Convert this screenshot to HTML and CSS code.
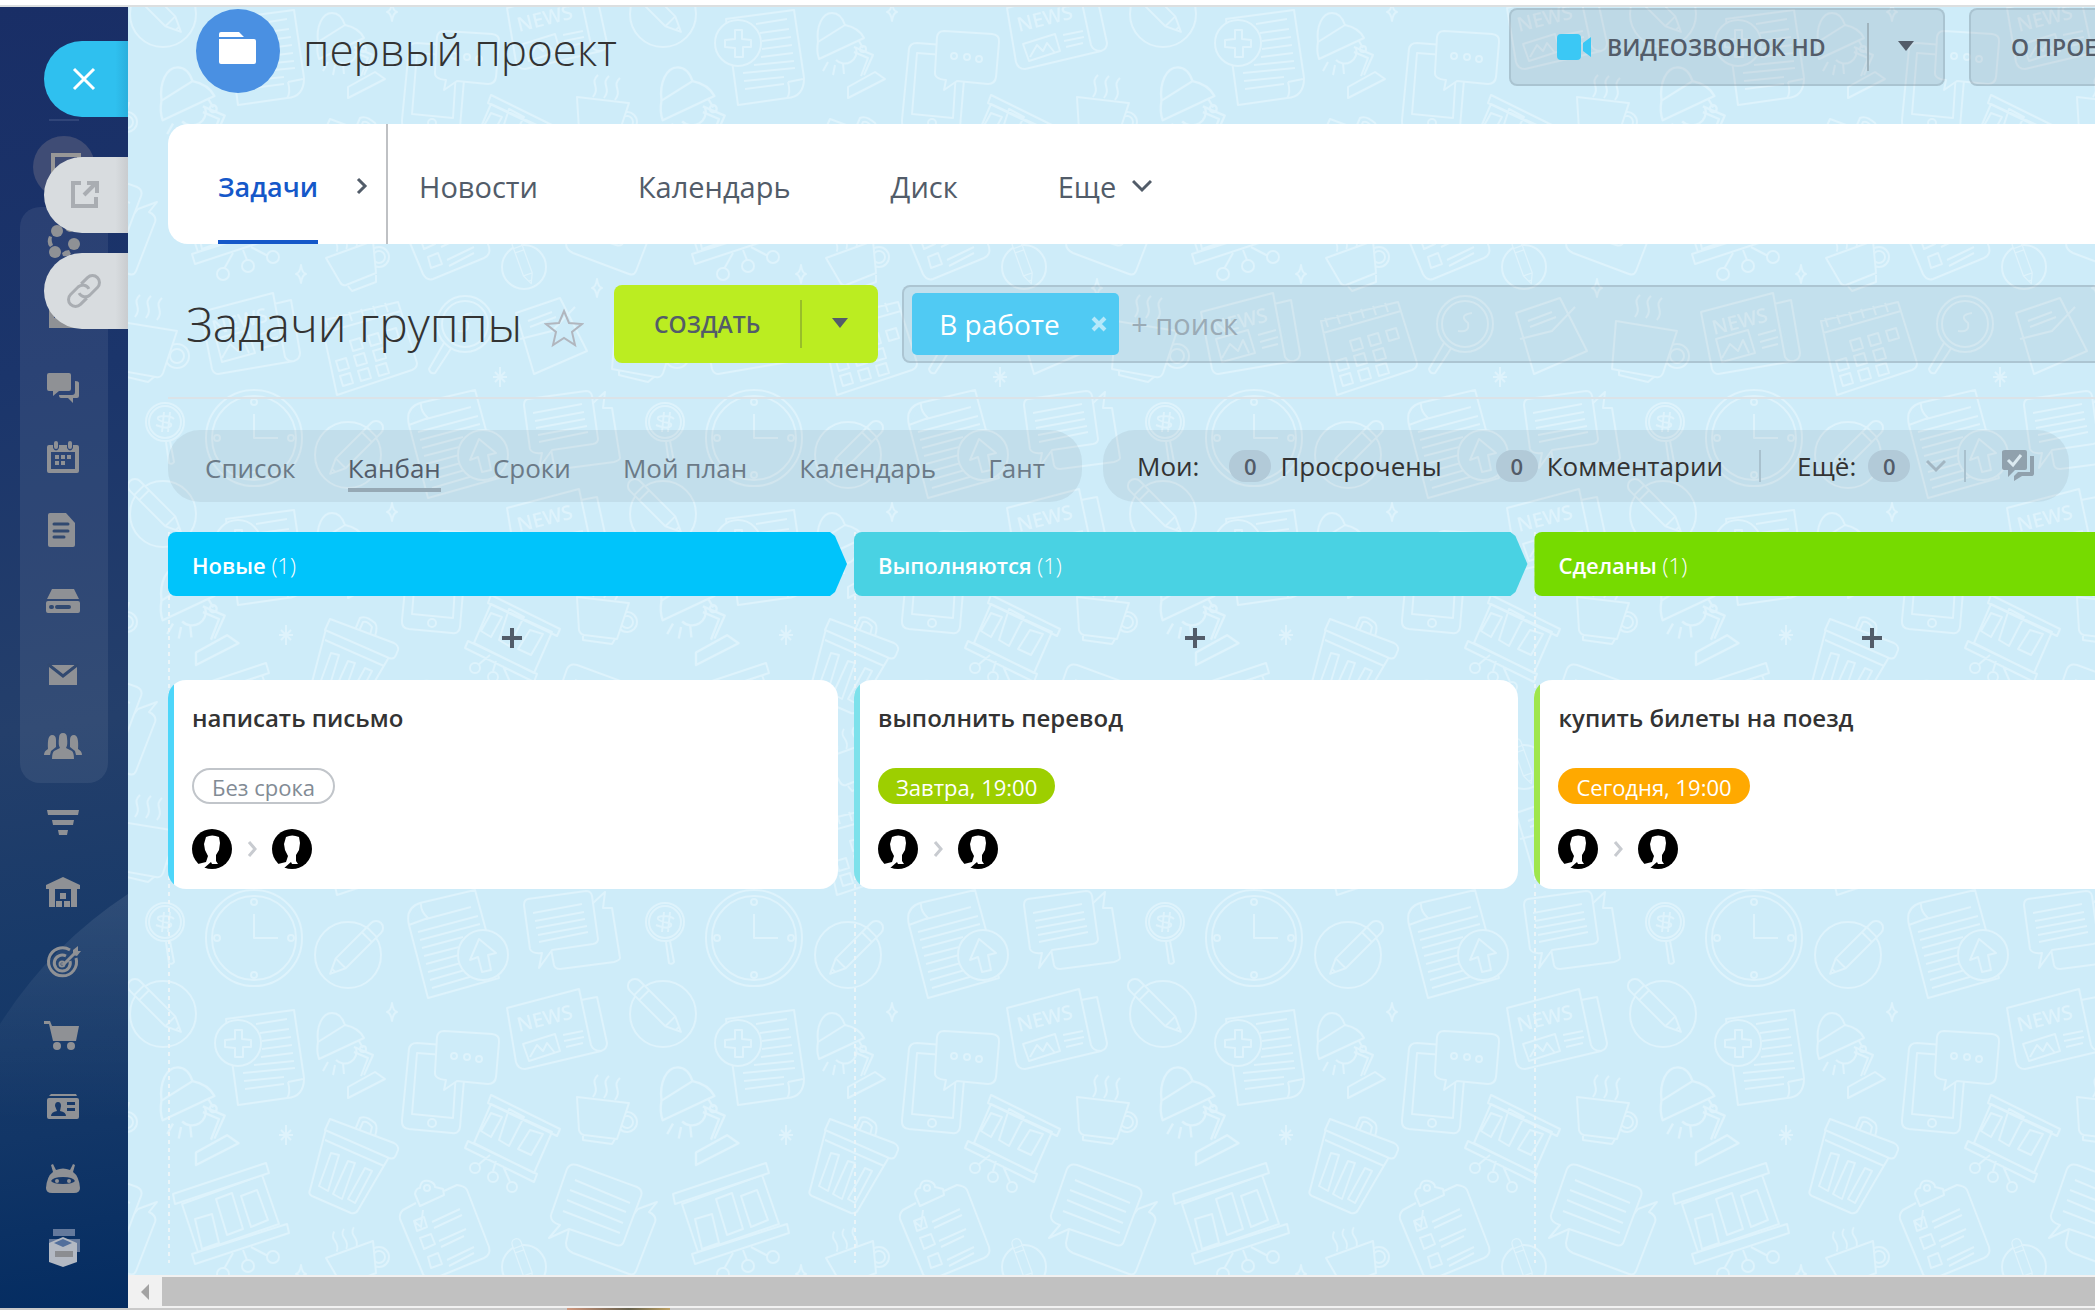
FILE: index.html
```html
<!DOCTYPE html>
<html lang="ru">
<head>
<meta charset="utf-8">
<title>первый проект</title>
<link rel="stylesheet" href="styles.css">
</head>
<body>
<svg class="sprite" width="0" height="0" aria-hidden="true">
  <defs>
    <g id="pencil"><path d="M7-7a7 7 0 0 0 0 14H57L72 0L57-7ZM13-7v14M20-7v14M57-7v14M67-2v4"/></g>
    <g id="lamp">
      <path d="M190 151C188 136 194 122 204 122C211 122 215 128 217 134"/>
      <path d="M208 169a12 12 0 0 0 20-12"/>
      <path d="M190 151L217 134C227 136 233 141 236 147L191 168C189 162 189 156 190 151Z"/>
      <path d="M226 156L245 164L236 184M226 161L240 167L233 185M231 150L235 157"/><circle cx="235" cy="158" r="3"/>
      <path d="M220 196L247 181L257 188L220 207ZM200 171l-5 9M207 174l-2 10M215 173l1 10"/>
    </g>
    <g id="star8"><path d="M0-10V10M-7 0H7M-5-5L5 5M-5 5L5-5"/></g>
    <g id="spark"><path d="M0-9Q1-1 5 0Q1 1 0 9Q-1 1-5 0Q-1-1 0-9Z"/></g>
    <g id="steam"><path d="M5 0C-4 8 8 12 0 22M16 1C7 9 19 13 11 23M27 3C18 11 30 15 22 25"/></g>
    <g id="tile">
      <g id="doodles">
        <path d="M38 51L41 72Q44 74 46 71L42 50"/><circle cx="37" cy="31" r="19"/><circle cx="37" cy="31" r="16"/>
        <path d="M46 28C42 24 28 24 30 28C34 33 45 30 43 35C41 38 33 36 28 34M36 21L34 41M42 21L40 41"/>
        <circle cx="126" cy="47" r="48"/><circle cx="126" cy="47" r="42"/><path d="M126 23V47H150"/>
        <circle cx="126" cy="11" r="3"/><circle cx="126" cy="84" r="3"/><circle cx="89" cy="47" r="3"/><circle cx="163" cy="47" r="3"/>
        <circle cx="220" cy="64" r="33"/><use href="#pencil" transform="translate(253 32) rotate(135)"/>
        <path d="M281 34Q277 17 292 12L347-1L371 87L300 107ZM281 34L300 27Q292 20 293 11"/>
        <path d="M298 28L343 16M290 41L350 25M292 49L352 33M294 57L335 46M296 65L331 56M298 73L331 64M300 81L333 72M302 89L337 79M304 97L345 85"/>
        <circle cx="355" cy="64" r="25"/><path d="M351 48L368 62L360 64L363 79L354 81L350 66L342 69Z"/>
        <path d="M464 13L477 1L475 17L484 17Q492 67 492 67Q492 69 486 71L432 78Q427 78 426 74L423 58"/>
        <path d="M400 8L458 0Q463 0 464 5L470 48Q470 52 465 53L424 59L411 77L414 62Q404 63 402 58L396 14Q396 9 400 8Z"/>
        <path d="M405 22L454 13M407 30L456 21M408 37L457 28M410 44L459 35M411 51L460 41"/>
        <circle cx="35" cy="123" r="33"/><use href="#pencil" transform="translate(2 90) rotate(45)"/>
        <path d="M98 128L166 119L176 187Q176 206 159 207L110 214L105 177Z"/>
        <path d="M160 191L175 188M160 191Q163 202 159 207M128 133L159 128M132 142L161 138M134 150L163 146M134 158L164 154M133 166L165 162M126 174L166 170M115 182L167 177M116 190L156 186M117 198L156 193"/>
        <circle cx="110" cy="152" r="23"/><path d="M107 139H114V148L123 149V156L115 156V166H107V157L97 156V149L107 148Z"/>
        <use href="#lamp"/><use href="#lamp" transform="translate(-185 36) scale(1.15)"/>
        <use href="#spark" x="264" y="121"/><use href="#star8" x="158" y="244"/>
        <path d="M289 152L328 155Q338 156 338 165L332 236Q331 243 324 242L281 238Q273 237 274 229L281 158Q282 152 289 152ZM289 162L329 165L325 227L284 223Z"/><circle cx="304" cy="232" r="4"/>
        <path d="M316 140L364 143Q372 144 371 151L368 186Q367 193 360 193L329 190L316 199L318 189Q306 188 307 181L309 146Q310 140 316 140Z"/><circle cx="326" cy="165" r="3"/><circle cx="339" cy="166" r="3"/><circle cx="351" cy="168" r="3"/>
        <path d="M453 109L469 106L479 152Q479 158 473 160L397 178Q390 178 388 171L379 117L451 98L463 154Q465 160 473 160M395 153L427 143L432 160L401 170ZM402 166L409 154L415 160L419 152L427 162M435 144L455 140M436 150L456 146M438 156L455 152"/>
        <text x="391" y="141" transform="rotate(-14 391 141)">NEWS</text>
        <path d="M363 213L346 252L406 282L424 241ZM363 222L374 226L363 246L353 240ZM381 218L396 226L381 255L371 249ZM402 239L415 243L403 264L390 258ZM363 204L432 238L429 245L360 212ZM340 250L409 283L406 291L337 257ZM362 264L350 274M368 270L365 280M375 275L382 291"/>
        <circle cx="347" cy="277" r="5"/><circle cx="365" cy="286" r="5"/><circle cx="384" cy="296" r="5"/>
        <circle cx="499" cy="231" r="10"/><circle cx="499" cy="231" r="6"/><path d="M449 206L501 212L489 248L456 244Q452 243 451 239ZM455 245V249L484 253L487 248"/><use href="#steam" x="465" y="184"/>
        <path d="M227 239L232 227Q238 224 247 232Q250 236 247 245M231 240L235 231Q240 230 244 236L242 244"/>
        <path d="M198 238L182 299Q180 303 184 305L223 322Q228 323 230 319L261 266ZM197 249L256 275"/>
        <path d="M202 228L266 252Q271 255 270 259L268 264Q266 269 261 267L197 239ZM203 262L211 264L200 300L191 295ZM220 270L227 272L214 308L205 303ZM237 277L244 280L227 312L220 308Z"/>
        <path d="M54 313L70 361L151 333L134 284ZM67 328L84 323L91 352L74 358ZM88 308L104 302L115 338L99 344ZM113 305L129 299L140 329L123 336Z"/>
        <path d="M45 303L138 272L141 282L47 313ZM64 363L159 333L161 342L67 373ZM105 362L96 378M115 359L119 369M123 356L140 365"/>
        <circle cx="95" cy="383" r="6"/><circle cx="120" cy="375" r="6"/><circle cx="145" cy="366" r="6"/>
        <path d="M288 312L275 319Q271 323 272 328L295 383Q299 390 305 388L356 367Q363 364 361 356L339 299Q337 295 329 294L316 300"/>
        <path d="M287 303Q288 297 292 297Q293 288 301 290Q307 292 307 296L315 298L316 304L292 315Z"/><circle cx="299" cy="297" r="3"/>
        <path d="M286 330L296 326L299 336L289 340ZM292 347L303 343L307 353L296 358ZM300 366L310 362L314 373L303 377ZM287 331L293 336L295 319M304 331L332 318M306 337L334 324M311 350L338 338M313 356L336 345M319 369L346 356M321 375L346 362"/>
        <path d="M506 323L510 318L529 311L521 321Q529 325 527 331L508 380Q506 385 501 383L445 362Q438 359 438 352L441 338"/>
        <path d="M449 274L509 296Q515 299 513 305L496 350Q494 356 488 354L441 338L421 347L432 334Q422 331 423 324L439 278Q442 272 449 274Z"/>
        <path d="M447 289L502 312M442 299L498 321M439 309L495 332M435 320L492 342"/>
        <circle cx="251" cy="366" r="10"/><circle cx="251" cy="366" r="6"/><path d="M198 367L245 350L248 382L218 394Q214 395 212 391ZM220 395L224 400L248 391V384"/><use href="#steam" transform="translate(202 342) rotate(-20) scale(.9)"/>
        <use href="#spark" x="173" y="383"/><use href="#spark" x="469" y="397"/>
        <circle cx="396" cy="376" r="22"/><use href="#pencil" transform="translate(387 348) rotate(70) scale(.66)"/>
        <use href="#steam" x="7" y="404"/><circle cx="49" cy="465" r="12"/><circle cx="49" cy="465" r="7"/><path d="M-12 430L49 440L35 482Q33 487 28 486L-16 478ZM-9 479V484L20 491L26 486"/>
        <path d="M146 413L163 409L172 462Q172 468 166 470L90 483Q86 483 84 478L73 421L145 402L157 466Q160 471 166 470M88 448L120 439L127 462L94 471ZM94 467L102 453L110 460L115 449L121 462M130 444L148 439M132 451L150 446M134 457L150 453"/><text x="86" y="444" transform="rotate(-14 86 444)">NEWS</text>
        <path d="M193 430L270 411L289 472Q289 477 284 479L209 504ZM195 442L273 420M200 436l-3-9M212 433l-3-9M224 430l-3-9M236 427l-3-9M248 424l-3-9M260 421l-3-9M222 450l10-3 3 10-10 3ZM240 445l10-3 3 10-10 3ZM258 440l10-3 3 10-10 3ZM208 470l10-3 3 10-10 3ZM226 465l10-3 3 10-10 3ZM245 460l10-3 3 10-10 3ZM212 485l10-3 3 10-10 3ZM230 480l10-3 3 10-10 3ZM248 475l10-3 3 10-10 3Z"/>
        <path d="M316 452L301 478Q302 483 307 482L324 456"/><circle cx="337" cy="433" r="28"/><circle cx="337" cy="433" r="23"/><path d="M330 440Q342 442 340 432Q330 424 344 422"/>
        <path d="M388 422L432 407L459 460L406 483ZM392 448L424 440L447 416M400 430L424 421M402 436L428 426"/>
        <use href="#star8" x="372" y="486"/>
      </g>
    </g>
    <pattern id="office" width="500" height="500" y="384" patternUnits="userSpaceOnUse">
      <use href="#tile"/><use href="#tile" x="-500"/><use href="#tile" x="500"/><use href="#tile" y="-500"/><use href="#tile" y="500"/>
    </pattern>
    <symbol id="face" viewBox="0 0 40 40">
      <circle cx="20" cy="20" r="20" fill="#000"/>
      <path fill="#fff" d="M14 8Q20 5 27 8L28 14L27 21L24 26V32L26 35L20 35L19 33L11 40H2L6 35L14 33L16 27L13 21L12 15Z"/>
      <path fill="#fff" d="M31 40L34 36L38 41Z"/>
    </symbol>
    <symbol id="next" viewBox="0 0 16 20"><path d="M5 3L11 10L5 17" fill="none" stroke="#c8cbd0" stroke-width="3"/></symbol>
    <symbol id="caret" viewBox="0 0 16 12"><path d="M0 0H16L8 10Z" fill="currentColor"/></symbol>
    <symbol id="down" viewBox="0 0 20 14"><path d="M1 2L10 11L19 2" fill="none" stroke="currentColor" stroke-width="3"/></symbol>
  </defs>
</svg>
<div class="browser-edge"></div>
<div class="app">
  <nav class="rail" aria-label="Главное меню">
    <svg class="rail-arc" viewBox="0 0 128 420" preserveAspectRatio="none" aria-hidden="true"><path d="M128 0Q50 52 0 132V420H128Z" fill="url(#arcfill)"/><defs><linearGradient id="arcfill" x2="0" y2="1"><stop stop-color="#fff" stop-opacity=".09"/><stop offset=".55" stop-color="#fff" stop-opacity="0"/></linearGradient></defs></svg>
    <div class="rail-top"><span class="rail-line"></span></div>
    <a class="rail-home" href="#" aria-label="Рабочий стол"><svg viewBox="0 0 62 62"><path d="M18 17H48V47H18ZM22 21V43H44V21Z" fill="#989797" fill-rule="evenodd"/></svg></a>
    <div class="rail-group">
      <a href="#" aria-label="Связи"><svg viewBox="0 0 48 48"><circle cx="17" cy="12" r="6"/><circle cx="34" cy="25" r="6"/><circle cx="15" cy="33" r="6"/><circle cx="30" cy="8" r="5"/><path d="M9 17Q6 24 10 28L13 26Q11 22 12 18ZM23 37Q28 38 31 35L29 31Q25 31 22 34Z"/></svg></a>
      <a href="#" aria-label="Лента"><svg viewBox="0 0 48 48"><path d="M9 6H40V37H9ZM14 11V27H35V11Z" fill-rule="evenodd"/></svg></a>
      <a href="#" aria-label="Чат"><svg viewBox="0 0 48 48"><path d="M9 10H29Q31 10 31 12V26Q31 28 29 28H19L13 33V28H9Q7 28 7 26V12Q7 10 9 10Z"/><path d="M35 18Q39 18 39 20V33Q39 35 37 35H33V40L28 35H21Q19 35 19 32H32Q35 32 35 29Z"/></svg></a>
      <a href="#" aria-label="Календарь"><svg viewBox="0 0 48 48"><path d="M9 10H13V13Q16 18 19 13V10H27V13Q30 18 33 13V10H37Q39 10 39 12V36Q39 38 37 38H9Q7 38 7 36V12Q7 10 9 10ZM11 17V34H35V17Z" fill-rule="evenodd"/><rect x="14" y="6" width="4" height="8" rx="2"/><rect x="28" y="6" width="4" height="8" rx="2"/><path d="M15 20h4v4h-4zM21 20h4v4h-4zM27 20h4v4h-4zM15 26h4v4h-4zM21 26h4v4h-4z"/></svg></a>
      <a href="#" aria-label="Документы"><svg viewBox="0 0 48 48"><path d="M10 6H26L35 16V38Q35 40 33 40H10Q8 40 8 38V8Q8 6 10 6Z"/><path d="M14 17H28M14 24H28M14 30H24" class="cut"/></svg></a>
      <a href="#" aria-label="Диск"><svg viewBox="0 0 48 48"><path d="M12 10H34L39 20H7ZM8 22H38Q40 22 40 24V32Q40 34 38 34H8Q6 34 6 32V24Q6 22 8 22Z"/><path d="M17 28H29M11 28H12" class="cut wide"/></svg></a>
      <a href="#" aria-label="Почта"><svg viewBox="0 0 48 48"><path d="M9 14H37V34H9Z"/><path d="M9 14L23 25L37 14" class="cut"/><path d="M12 14H34L23 22Z"/></svg></a>
      <a href="#" aria-label="Группы"><svg viewBox="0 0 48 48"><path d="M19 15Q19 10 23 10Q27 10 27 15Q28 22 26 25L32 28Q34 30 34 36H12Q12 30 14 28L20 25Q18 22 19 15Z"/><path d="M12 12Q16 12 16 17V24L11 28L10 32H4Q4 28 8 26Q7 12 12 12ZM34 12Q30 12 30 17V24L35 28L36 32H42Q42 28 38 26Q39 12 34 12Z"/></svg></a>
    </div>
    <a href="#" aria-label="CRM"><svg viewBox="0 0 48 48"><path d="M7 15H39L38 20H8ZM12 25H34L33 30H13ZM18 35H28L27 40H19Z"/></svg></a>
    <a href="#" aria-label="Склад"><svg viewBox="0 0 48 48"><path d="M6 18L23 10L40 18V22H37V40H31V22H15V40H9V22H6Z"/><path d="M20 26h6v6h-6zM16 34h6v6h-6zM24 34h6v6h-6z"/></svg></a>
    <a href="#" aria-label="Цели"><svg viewBox="0 0 48 48" class="lines"><path d="M30 11A14 14 0 1 0 36 19M26 17A8 8 0 1 0 30 22M23 26L35 14"/><circle cx="22" cy="25" r="1"/><path d="M33 16V11L38 7V12H41L37 17Z"/></svg></a>
    <a href="#" aria-label="Магазин"><svg viewBox="0 0 48 48"><path d="M4 10H10L12 15H39L36 30H13L9 13H4Z"/><circle cx="17" cy="35" r="4"/><circle cx="31" cy="35" r="4"/></svg></a>
    <a href="#" aria-label="Контакты"><svg viewBox="0 0 48 48"><path d="M11 11H36L37 13H9ZM9 15H37Q39 15 39 17V34Q39 36 37 36H9Q7 36 7 34V17Q7 15 9 15Z"/><path d="M18 19Q21 19 21 23L20 28Q26 29 26 33H11Q11 29 17 28L15 23Q15 19 18 19ZM27 19h8v3h-8zM27 25h8v3h-8z" class="hole"/></svg></a>
    <a href="#" aria-label="Роботы"><svg viewBox="0 0 48 48"><path d="M11 10L13 9L16 15Q23 12 30 15L33 9L35 10L33 17Q39 21 40 33Q40 38 34 38H12Q6 38 6 33Q7 21 13 17Z"/><path d="M11 26Q13 22 23 22Q33 22 35 26Q33 29 23 29Q13 29 11 26Z" class="hole"/><circle cx="17" cy="26" r="2"/><circle cx="29" cy="26" r="2"/></svg></a>
    <a href="#" aria-label="Приложения"><svg viewBox="0 0 48 48"><path d="M13 2H35V9H13ZM9 12H40V25H9Z" fill="#64799c"/><path d="M23 10L37 16V35L23 40L9 35V16Z" fill="#b3b9c3"/><path d="M14 16L23 12L32 16L23 20Z" fill="#526f9c"/><path d="M15 24H33V30H15Z" fill="#8b8d91"/></svg></a>
  </nav>

  <div class="slider-tabs">
    <button class="tab-close" aria-label="Закрыть"><svg viewBox="0 0 40 40"><path d="M10 10L30 30M30 10L10 30" stroke="#fff" stroke-width="3" fill="none"/></svg></button>
    <button aria-label="Открыть в новом окне"><svg viewBox="0 0 40 40"><path d="M17 8H9V31H32V22M20 20L31 9M23 8H33V18" stroke="#a9adb2" stroke-width="4" fill="none"/></svg></button>
    <button aria-label="Скопировать ссылку"><svg viewBox="0 0 40 40"><g transform="rotate(-45 20 20)" fill="none" stroke="#a9adb2" stroke-width="3"><path d="M17 27H8A7 7 0 0 1 8 13H19A7 7 0 0 1 25 22"/><path d="M23 13H32A7 7 0 0 1 32 27H21A7 7 0 0 1 15 18"/></g></svg></button>
  </div>

  <div class="slider">
    <main class="panel">
      <svg class="wallpaper" aria-hidden="true"><rect width="100%" height="100%" fill="url(#office)"/></svg>
      <header class="project">
        <span class="project-icon"><svg viewBox="0 0 84 84"><path d="M25 23H43L48 28H23V25Q23 23 25 23ZM23 30H58Q60 30 60 32V53Q60 55 58 55H25Q23 55 23 53Z" fill="#fff"/></svg></span>
        <h1>первый проект</h1>
        <div class="project-actions">
          <div class="glass video"><button class="video-main"><svg viewBox="0 0 34 26"><path d="M4 4H20Q24 4 24 8V22Q24 26 20 26H4Q0 26 0 22V4Q0 0 4 0H20Q24 0 24 4V8ZM26 9L34 3V23L26 17Z" fill="#3bc8f5"/></svg>ВИДЕОЗВОНОК HD</button><button class="video-more" aria-label="Ещё"><svg class="caret"><use href="#caret"/></svg></button></div>
          <button class="glass about">О ПРОЕКТЕ</button>
        </div>
      </header>

      <nav class="sections">
        <div class="current"><a href="#">Задачи</a><svg viewBox="0 0 12 20"><path d="M2 3L9 10L2 17" fill="none" stroke="#525c69" stroke-width="3"/></svg></div>
        <a href="#">Новости</a><a href="#">Календарь</a><a href="#">Диск</a><a href="#">Еще<svg class="down"><use href="#down"/></svg></a>
      </nav>

      <section class="toolbar">
        <h2>Задачи группы</h2>
        <button class="star" aria-label="В избранное"><svg viewBox="0 0 40 40"><path d="M20 3L25 15L38 16L28 24L31 37L20 30L9 37L12 24L2 16L15 15Z" fill="none" stroke="#b1b6be" stroke-width="2"/></svg></button>
        <div class="create"><button class="create-main">СОЗДАТЬ</button><button class="create-more" aria-label="Варианты"><svg class="caret"><use href="#caret"/></svg></button></div>
        <div class="search"><span class="chip">В работе<button aria-label="Убрать фильтр"><svg viewBox="0 0 16 16"><path d="M2 2L14 14M14 2L2 14" stroke="#b5e8fa" stroke-width="4"/></svg></button></span><input type="text" aria-label="Поиск" placeholder="+ поиск"></div>
      </section>

      <div class="filters">
        <nav class="views"><a href="#">Список</a><a href="#" class="active">Канбан</a><a href="#">Сроки</a><a href="#">Мой план</a><a href="#">Календарь</a><a href="#">Гант</a></nav>
        <div class="counters">
          <span class="mine">Мои:</span>
          <a href="#" class="late"><b>0</b>Просрочены</a><a href="#"><b>0</b>Комментарии</a>
          <span class="more">Ещё:<b>0</b><svg class="down"><use href="#down"/></svg></span>
          <button class="read" aria-label="Прочитать всё"><svg viewBox="0 0 32 32"><path d="M3 0H23Q25 0 25 2V18Q25 20 23 20H13L6 27V20H2Q0 20 0 18V2Q0 0 3 0ZM28 6H32V24Q32 26 29 26H20L12 31V26L16 22H28Z" fill="#90a1ad"/><path d="M6 10L11 15L19 5" fill="none" stroke="#dceaf1" stroke-width="3"/></svg></button>
        </div>
      </div>

      <div class="board">
        <section class="column new">
          <h3><span>Новые <small>(1)</small></span></h3>
          <button class="add" aria-label="Добавить"></button>
          <article class="card"><h4>написать письмо</h4><span class="due none">Без срока</span><div class="people"><svg class="face"><use href="#face"/></svg><svg class="next"><use href="#next"/></svg><svg class="face"><use href="#face"/></svg></div></article>
        </section>
        <section class="column doing">
          <h3><span>Выполняются <small>(1)</small></span></h3>
          <button class="add" aria-label="Добавить"></button>
          <article class="card"><h4>выполнить перевод</h4><span class="due later">Завтра, 19:00</span><div class="people"><svg class="face"><use href="#face"/></svg><svg class="next"><use href="#next"/></svg><svg class="face"><use href="#face"/></svg></div></article>
        </section>
        <section class="column done">
          <h3><span>Сделаны <small>(1)</small></span></h3>
          <button class="add" aria-label="Добавить"></button>
          <article class="card"><h4>купить билеты на поезд</h4><span class="due today">Сегодня, 19:00</span><div class="people"><svg class="face"><use href="#face"/></svg><svg class="next"><use href="#next"/></svg><svg class="face"><use href="#face"/></svg></div></article>
        </section>
      </div>
    </main>
    <div class="scrollbar"><svg viewBox="0 0 10 18"><path d="M9 1V17L1 9Z" fill="#a3a3a3"/></svg><span></span></div>
  </div>
</div>
<footer class="under"><span></span></footer>
</body>
</html>
```
FILE: styles.css
```css
* { box-sizing: border-box; }
body { margin: 0; height: 100vh; display: flex; flex-direction: column; overflow: hidden; font-family: "Open Sans", "Noto Sans", sans-serif; color: #333; background: #fff; }
h1, h2, h3, h4 { margin: 0; font-weight: 300; }
a { color: inherit; text-decoration: none; }
button { margin: 0; padding: 0; border: 0; background: none; color: inherit; font: inherit; }
svg { display: block; flex: none; }
.sprite { position: absolute; }
.browser-edge { flex: none; height: 7px; border-bottom: 2px solid #dcdfe0; background: #fff; }
.app { position: relative; flex: 1; min-height: 0; display: flex; }

.rail { position: relative; flex: none; width: 128px; display: flex; flex-direction: column; align-items: center; overflow: hidden; background: linear-gradient(172deg, #192e66 0%, #1b356b 28%, #243f6b 55%, #183a69 72%, #123667 86%, #042c61 100%); }
.rail-arc { position: absolute; left: 0; bottom: 0; width: 128px; height: 414px; }
.rail-top { height: 129px; flex: none; display: flex; align-items: center; padding-top: 96px; }
.rail-line { width: 30px; height: 2px; background: #304579; }
.rail-home { flex: none; width: 62px; height: 62px; border-radius: 50%; background: #3f4c75; }
.rail-group { flex: none; width: 88px; margin-top: 9px; border-radius: 20px; background: rgba(255,255,255,.07); }
.rail-group a, .rail > a:not(.rail-home) { position: relative; display: flex; justify-content: center; align-items: center; height: 72px; flex: none; }
.rail-group svg, .rail > a:not(.rail-home) svg { width: 48px; height: 48px; fill: #8f9195; }
.rail .cut { fill: none; stroke: #314970; stroke-width: 3; stroke-linecap: round; }
.rail .wide { stroke-width: 4; }
.rail .hole { fill: #173868; }
.rail svg.lines path:first-child { fill: none; stroke: #8f9195; stroke-width: 3; }
.rail svg.lines circle { stroke: #8f9195; stroke-width: 5; }

.slider-tabs { position: absolute; left: 44px; top: 34px; width: 84px; display: flex; flex-direction: column; gap: 20px; }
.slider-tabs button { height: 76px; display: flex; align-items: center; padding-left: 20px; border-radius: 38px 0 0 38px; background: linear-gradient(90deg, #d8dcdf 85%, #c9cccf); }
.slider-tabs .tab-close { margin-bottom: 20px; background: linear-gradient(90deg, #2fc0ef 85%, #29afdd); }
.slider-tabs svg { width: 40px; height: 40px; }

.slider { flex: 1; min-width: 0; display: flex; flex-direction: column; }
.panel { position: relative; flex: 1; min-height: 0; overflow: hidden; display: flex; flex-direction: column; padding-left: 40px; background: #ceecf9; }
.wallpaper { position: absolute; inset: 0; width: 100%; height: 100%; }
.panel > :not(.wallpaper) { position: relative; }
#doodles { fill: none; stroke: #def3fc; stroke-width: 2; stroke-linejoin: round; }
#doodles path, #doodles circle, #pencil path { fill: #ceecf9; }
#doodles text { fill: #def3fc; stroke: none; font: 600 20px "Open Sans", sans-serif; }

.project { height: 117px; flex: none; display: flex; align-items: flex-start; padding: 1px 0 0 28px; }
.project-icon { flex: none; width: 84px; height: 84px; margin-top: 1px; border-radius: 50%; background: #4a90e2; }
.project h1 { margin-left: 23px; font-size: 44px; line-height: 82px; white-space: nowrap; }
.project-actions { flex: 1; min-width: 0; display: flex; justify-content: flex-end; gap: 24px; margin-right: -102px; }
.glass { height: 78px; border: 2px solid rgba(90,110,120,.2); border-radius: 8px; background: rgba(82,92,105,.13); font-size: 23px; color: #535c69; font-weight: 600; white-space: nowrap; }
.video { display: flex; align-items: center; width: 436px; }
.video-main { display: flex; align-items: center; gap: 16px; width: 358px; height: 48px; padding-left: 46px; border-right: 2px solid #a0b4be; }
.video-main svg { width: 34px; height: 26px; }
.video-more, .create-more { flex: 1; display: flex; justify-content: center; }
.caret { width: 16px; height: 12px; }
.about { width: 228px; padding-left: 40px; text-align: left; }

.sections { height: 120px; flex: none; display: flex; align-items: stretch; border-radius: 20px 0 0 20px; background: #fff; font-size: 29px; color: #525c69; font-weight: 400; }
.sections > a { display: flex; align-items: center; margin-right: 100px; padding-top: 4px; }
.current { display: flex; align-items: center; justify-content: space-between; width: 220px; padding: 0 18px 0 50px; margin-right: 31px; border-right: 2px solid #bfc1c4; }
.current a { height: 120px; line-height: 126px; border-bottom: 4px solid #1558c9; color: #1558c9; font-size: 27px; font-weight: 600; }
.current svg { width: 12px; height: 20px; margin-top: 4px; }
.down { width: 20px; height: 14px; margin-left: 16px; }

.toolbar { height: 155px; flex: none; display: flex; align-items: center; border-bottom: 2px solid #dbe3e8; padding: 6px 0 0 18px; }
.toolbar h2 { font-size: 48px; line-height: 78px; white-space: nowrap; }
.star { width: 40px; height: 40px; margin: 8px 30px 0 22px; }
.create { flex: none; display: flex; align-items: center; width: 264px; height: 78px; border-radius: 8px; background: #bbed21; color: #535c69; font-size: 23px; font-weight: 600; }
.create-main { width: 188px; height: 48px; border-right: 2px solid #98be29; }
.search { flex: 1; display: flex; align-items: center; gap: 12px; height: 78px; margin: 0 -10px 0 24px; padding-left: 8px; border: 2px solid rgba(82,92,105,.2); border-radius: 8px; background: rgba(82,92,105,.08); font-size: 29px; }
.chip { flex: none; display: flex; align-items: center; justify-content: space-between; width: 207px; height: 62px; padding: 0 12px 0 27px; border-radius: 5px; background: #50caf3; color: #fff; font-size: 28px; }
.chip svg { width: 16px; height: 16px; }
.search input { flex: 1; min-width: 0; padding: 0; border: 0; background: none; font: inherit; outline: 0; }
.search input::placeholder { color: #9aabb6; opacity: 1; }

.filters { flex: none; display: flex; gap: 21px; margin: 31px 26px 30px 0; height: 72px; font-size: 26px; font-weight: 400; white-space: nowrap; }
.views, .counters { display: flex; align-items: center; border-radius: 32px; background: rgba(82,92,105,.09); }
.views { width: 914px; flex: none; justify-content: space-between; padding: 0 37px; color: #6b7a87; }
.views a { border-bottom: 4px solid transparent; line-height: 40px; margin-top: 7px; }
.views .active { border-color: #96a9b5; color: #535c69; }
.counters { flex: 1; padding-left: 34px; }
.counters b { display: inline-flex; align-items: center; justify-content: center; width: 42px; height: 32px; margin-right: 9px; border-radius: 16px; background: #b2cad8; color: #535c69; font-size: 22px; font-weight: 600; }
.counters a, .more { display: flex; align-items: center; }
.mine { margin-right: 30px; }
.late { margin-right: 54px; }
.more { margin-left: 36px; padding: 0 18px 0 36px; line-height: 28px; border: 2px solid #a9c1ce; border-width: 0 2px; }
.more b { margin: 0 0 0 12px; }
.more .down { color: #a3b6c2; }
.read { margin-left: 36px; width: 32px; height: 32px; }
.read svg { width: 32px; height: 32px; }

.board { flex: 1; min-height: 0; display: flex; gap: 6px; margin-bottom: 12px; }
.column { flex: 0 0 35%; display: flex; flex-direction: column; background: repeating-linear-gradient(#eaf4f8 0 4px, transparent 4px 8px) 0 0 / 2px 100% no-repeat; }
.new { flex-basis: 680px; --main: #00c4fb; --edge: #4dd6fa; }
.doing { --main: #49d2e3; --edge: #7de1eb; }
.done { --main: #76db00; --edge: #9fe64c; }
.column h3 { flex: none; height: 64px; line-height: 66px; padding-left: 24px; border-radius: 8px; background: var(--main); clip-path: polygon(0 0, calc(100% - 18px) 0, calc(100% - 13px) 4px, calc(100% - 1px) 50%, calc(100% - 13px) 60px, calc(100% - 18px) 100%, 0 100%); color: #fff; font-size: 22px; font-weight: 600; }
.column small { font-size: 22px; font-weight: 300; }
.add { flex: none; align-self: center; width: 20px; height: 20px; margin: 32px 0; background: linear-gradient(#525c69, #525c69) center / 20px 4px no-repeat, linear-gradient(#525c69, #525c69) center / 4px 20px no-repeat; }
.new .add, .doing .add { margin-left: 8px; }
.card { flex: none; display: flex; flex-direction: column; align-items: flex-start; margin-right: 10px; height: 209px; padding: 22px 18px 22px 24px; border-radius: 18px; background: linear-gradient(var(--edge), var(--edge)) 0 0 / 6px 100% no-repeat #fff; }
.card h4 { font-size: 24px; line-height: 32px; font-weight: 600; }
.due { height: 36px; line-height: 38px; margin-top: 34px; padding: 0 18px; border-radius: 18px; color: #fff; font-size: 22px; font-weight: 400; }
.none { border: 2px solid #c1c5ca; line-height: 34px; color: #828b95; }
.later { background: #9dcf00; }
.today { background: #ffa900; }
.people { display: flex; align-items: center; gap: 12px; margin-top: 25px; }
.face { width: 40px; height: 40px; }
.next { width: 16px; height: 20px; }

.scrollbar { flex: none; display: flex; align-items: center; height: 33px; padding: 2px 0; background: #f1f1f1; }
.scrollbar svg { width: 10px; height: 18px; margin: 0 12px; }
.scrollbar span { flex: 1; align-self: stretch; background: #c1c1c1; }
.under { flex: none; height: 2px; background: #c9c9c9; }
.under span { display: block; width: 103px; height: 2px; margin-left: 567px; background: linear-gradient(90deg, #d0987f, #66604c 60%, #bda164); }
```
